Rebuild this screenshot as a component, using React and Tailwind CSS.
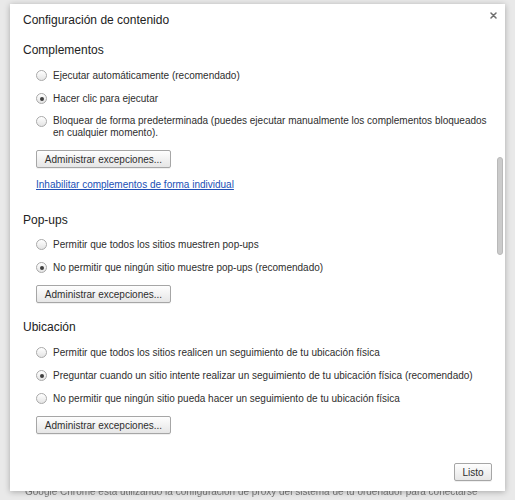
import React from "react";

const font = { fontFamily: '"Liberation Sans", Arial, sans-serif' };

function Radio({ checked }) {
  return (
    <span className="relative flex h-[11px] w-[11px] shrink-0 items-center justify-center rounded-full border border-[#a9a9a9] bg-gradient-to-b from-[#ffffff] to-[#e4e4e4] shadow-[inset_0_1px_0_rgba(255,255,255,0.8)]">
      {checked && <span className="h-[4px] w-[4px] rounded-full bg-[#3f3f3f]" />}
    </span>
  );
}

function RadioRow({ checked, children, className = "" }) {
  return (
    <div className={"flex h-[23px] items-center pl-[13px] " + className}>
      <Radio checked={checked} />
      <span className="ml-[6px] text-[10px] text-[#2e2e2e]">{children}</span>
    </div>
  );
}

function Btn({ children, className = "" }) {
  return (
    <div
      className={
        "flex h-[18px] items-center justify-center rounded-[2px] border border-[#a6a6a6] bg-gradient-to-b from-[#fefefe] to-[#e6e6e6] text-[10px] text-[#2e2e2e] shadow-[0_1px_0_rgba(0,0,0,0.06)] " +
        className
      }
    >
      {children}
    </div>
  );
}

function Heading({ children, className = "" }) {
  return (
    <div className={"flex h-[20px] items-center text-[12px] text-[#222] " + className}>
      {children}
    </div>
  );
}

export default function App() {
  return (
    <div
      style={font}
      className="relative h-[500px] w-[515px] overflow-hidden bg-[#e9e9e9]"
    >
      <div className="pl-[10px] pr-[10px] pt-[4px]">
        <div className="relative z-10 flex h-[487px] w-[495px] flex-col bg-white shadow-[0_1px_6px_rgba(0,0,0,0.28)]">
          {/* header */}
          <div className="flex h-[32px] items-center justify-between pl-[13px] pr-[8px]">
            <span className="text-[12px] text-[#222]">Configuración de contenido</span>
            <svg width="7" height="7" viewBox="0 0 7 7" className="-mt-[10px]">
              <path d="M1 1 L6 6 M6 1 L1 6" stroke="#6f6f6f" strokeWidth="1.5" strokeLinecap="round" />
            </svg>
          </div>

          {/* scroll content */}
          <div className="relative flex-1">
            <div className="pl-[13px] pt-[4px]">
              <Heading>Complementos</Heading>
              <RadioRow className="mt-[4px]">Ejecutar automáticamente (recomendado)</RadioRow>
              <RadioRow checked>Hacer clic para ejecutar</RadioRow>
              <div className="flex items-start pl-[13px] pt-[5px]">
                <span className="mt-[1px]">
                  <Radio />
                </span>
                <span className="ml-[6px] text-[10px] leading-[12px] text-[#2e2e2e]">
                  Bloquear de forma predeterminada (puedes ejecutar manualmente los complementos bloqueados
                  <br />
                  en cualquier momento).
                </span>
              </div>
              <Btn className="ml-[13px] mt-[11px] w-[135px]">Administrar excepciones...</Btn>
              <div className="ml-[13px] mt-[11px] h-[12px] text-[10px] leading-[12px] text-[#2150b6] underline">
                Inhabilitar complementos de forma individual
              </div>

              <Heading className="mt-[19px]">Pop-ups</Heading>
              <RadioRow className="mt-[3px]">Permitir que todos los sitios muestren pop-ups</RadioRow>
              <RadioRow checked>No permitir que ningún sitio muestre pop-ups (recomendado)</RadioRow>
              <Btn className="ml-[13px] mt-[6px] w-[135px]">Administrar excepciones...</Btn>

              <Heading className="mt-[14px]">Ubicación</Heading>
              <RadioRow className="mt-[4px]">
                Permitir que todos los sitios realicen un seguimiento de tu ubicación física
              </RadioRow>
              <RadioRow checked>
                Preguntar cuando un sitio intente realizar un seguimiento de tu ubicación física (recomendado)
              </RadioRow>
              <RadioRow>
                No permitir que ningún sitio pueda hacer un seguimiento de tu ubicación física
              </RadioRow>
              <Btn className="ml-[13px] mt-[6px] w-[135px]">Administrar excepciones...</Btn>
            </div>
            {/* scrollbar */}
            <div className="absolute right-[2px] top-[121px] h-[98px] w-[6px] rounded-[3px] border border-[#b9b9b9] bg-[#cbcbcb]" />
          </div>

          {/* footer */}
          <div className="flex justify-end pb-[10px] pr-[13px]">
            <Btn className="w-[38px]">Listo</Btn>
          </div>
        </div>
      </div>
      <div className="-mt-[5px] whitespace-nowrap pl-[25px] text-[10px] leading-[12px] text-[#7a7a7a] blur-[0.4px]">
        Google Chrome está utilizando la configuración de proxy del sistema de tu ordenador para conectarse
      </div>
    </div>
  );
}
